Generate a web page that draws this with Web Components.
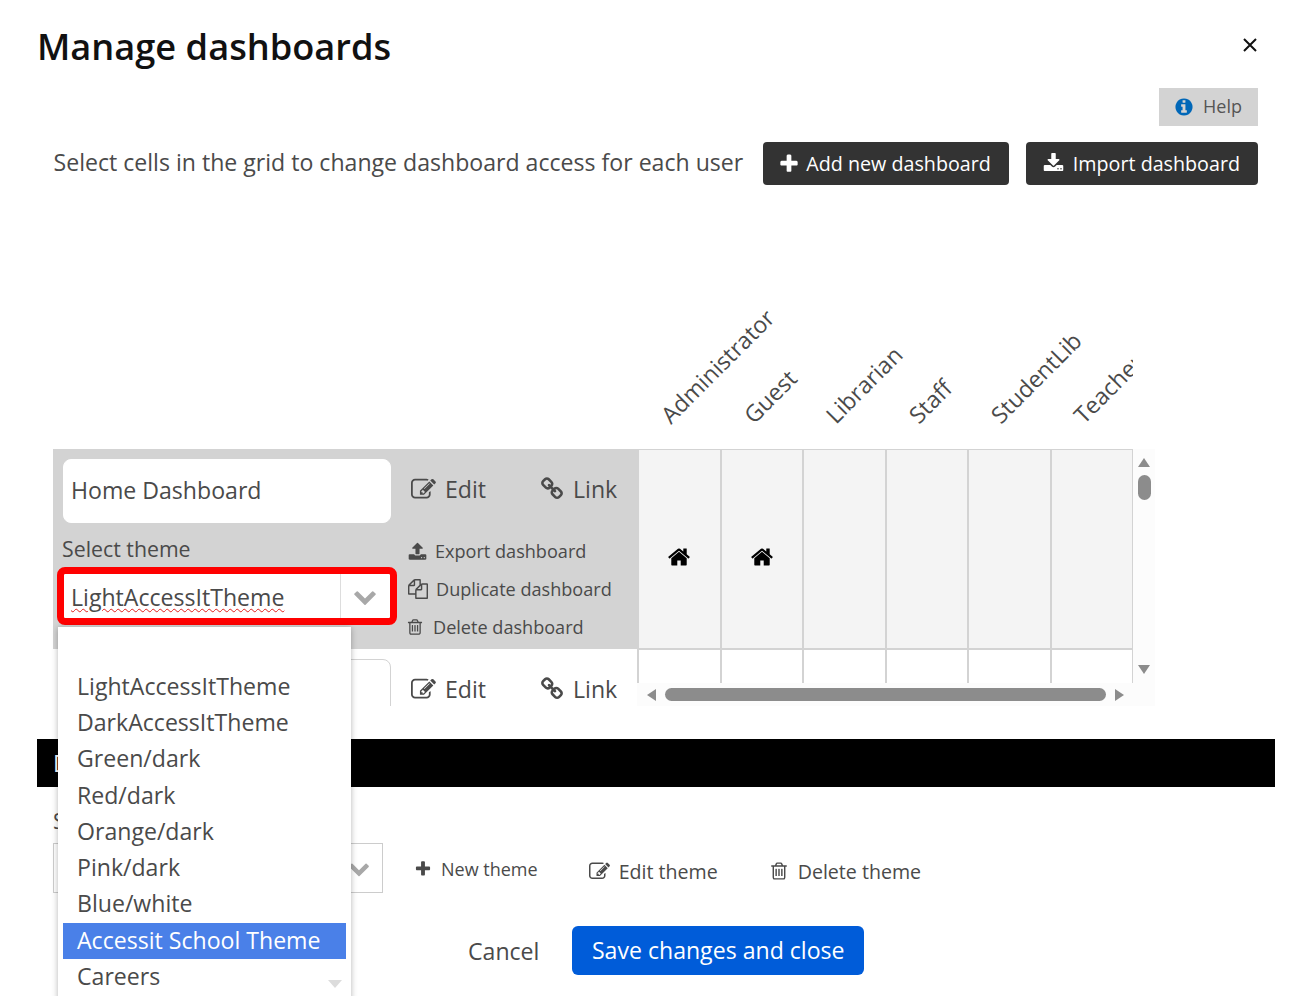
<!DOCTYPE html>
<html lang="en">
<head>
<meta charset="utf-8">
<title>Manage dashboards</title>
<style>
	html, body { margin: 0; padding: 0; height: 996px; overflow: hidden; background: #fff; }
	body { font-family: "Open Sans", sans-serif; color: #4a4a4a; }
</style>
</head>
<body>
<dash-dialog></dash-dialog>
<script>
'use strict';

const ICONS = {
	plus: 'M1600 736v192q0 40-28 68t-68 28h-416v416q0 40-28 68t-68 28h-192q-40 0-68-28t-28-68v-416h-416q-40 0-68-28t-28-68v-192q0-40 28-68t68-28h416v-416q0-40 28-68t68-28h192q40 0 68 28t28 68v416h416q40 0 68 28t28 68z',
	download: 'M1344 1344q0-26-19-45t-45-19-45 19-19 45 19 45 45 19 45-19 19-45zm256 0q0-26-19-45t-45-19-45 19-19 45 19 45 45 19 45-19 19-45zm128-224v320q0 40-28 68t-68 28h-1472q-40 0-68-28t-28-68v-320q0-40 28-68t68-28h465l135 136q58 56 136 56t136-56l136-136h464q40 0 68 28t28 68zm-325-569q17 41-14 70l-448 448q-18 19-45 19t-45-19l-448-448q-31-29-14-70 17-39 59-39h256v-448q0-26 19-45t45-19h256q26 0 45 19t19 45v448h256q42 0 59 39z',
	upload: 'M1344 1472q0-26-19-45t-45-19-45 19-19 45 19 45 45 19 45-19 19-45zm256 0q0-26-19-45t-45-19-45 19-19 45 19 45 45 19 45-19 19-45zm128-224v320q0 40-28 68t-68 28h-1472q-40 0-68-28t-28-68v-320q0-40 28-68t68-28h427q21 56 70.500 92t110.500 36h256q61 0 110.500-36t70.500-92h427q40 0 68 28t28 68zm-325-648q-17 40-59 40h-256v448q0 26-19 45t-45 19h-256q-26 0-45-19t-19-45v-448h-256q-42 0-59-40-17-39 14-69l448-448q18-19 45-19t45 19l448 448q31 30 14 69z',
	home: 'M1472 992v480q0 26-19 45t-45 19h-384v-384h-256v384h-384q-26 0-45-19t-19-45v-480q0-1 .5-3t.5-3l575-474 575 474q1 2 1 6zm223-69l-62 74q-8 9-21 11h-3q-13 0-21-7l-692-577-692 577q-12 8-24 7-13-2-21-11l-62-74q-8-10-7-23.500t11-21.500l719-599q32-26 76-26t76 26l244 204v-195q0-14 9-23t23-9h192q14 0 23 9t9 23v408l219 182q10 8 11 21.500t-7 23.500z',
	chevron: 'M1683 808l-742 741q-19 19-45 19t-45-19l-742-741q-19-19-19-45.500t19-45.500l166-165q19-19 45-19t45 19l531 531 531-531q19-19 45-19t45 19l166 165q19 19 19 45.500t-19 45.500z',
	info: 'M1152 1376v-160q0-14-9-23t-23-9h-96v-512q0-14-9-23t-23-9h-320q-14 0-23 9t-9 23v160q0 14 9 23t23 9h96v320h-96q-14 0-23 9t-9 23v160q0 14 9 23t23 9h448q14 0 23-9t9-23zm-128-896v-160q0-14-9-23t-23-9h-192q-14 0-23 9t-9 23v160q0 14 9 23t23 9h192q14 0 23-9t9-23zm640 416q0 209-103 385.500t-279.500 279.500-385.500 103-385.500-103-279.500-279.500-103-385.500 103-385.500 279.500-279.500 385.500-103 385.500 103 279.500 279.500 103 385.500z',
	edit: 'M888 1184l116-116-152-152-116 116v56h96v96h56zm440-720q-16-16-33 1l-350 350q-17 17-1 33t33-1l350-350q17-17 1-33zm80 594v190q0 119-84.500 203.500t-203.500 84.500h-832q-119 0-203.500-84.500t-84.500-203.500v-832q0-119 84.500-203.500t203.500-84.500h832q63 0 117 25 15 7 18 23 3 17-9 29l-49 49q-14 14-32 8-23-6-45-6h-832q-66 0-113 47t-47 113v832q0 66 47 113t113 47h832q66 0 113-47t47-113v-126q0-13 9-22l64-64q15-15 35-7t20 29zm-96-738l288 288-672 672h-288v-288zm444 132l-92 92-288-288 92-92q28-28 68-28t68 28l152 152q28 28 28 68t-28 68z',
	link: 'M1520 1216q0-40-28-68l-208-208q-28-28-68-28-42 0-72 32 3 3 19 18.500t21.500 21.500 15 19 13 25.500 3.500 27.500q0 40-28 68t-68 28q-15 0-27.500-3.500t-25.500-13-19-15-21.500-21.500-18.500-19q-33 31-33 73 0 40 28 68l206 207q27 27 68 27 40 0 68-26l147-146q28-28 28-67zm-703-705q0-40-28-68l-206-207q-28-28-68-28-39 0-68 27l-147 146q-28 28-28 67 0 40 28 68l208 208q27 27 68 27 42 0 72-31-3-3-19-18.500t-21.500-21.500-15-19-13-25.500-3.500-27.500q0-40 28-68t68-28q15 0 27.500 3.500t25.500 13 19 15 21.500 21.500 18.500 19q33-31 33-73zm895 705q0 120-85 203l-147 146q-83 83-203 83-121 0-204-85l-206-207q-83-83-83-203 0-123 88-209l-88-88q-86 88-208 88-120 0-204-84l-208-208q-84-84-84-204t85-203l147-146q83-83 203-83 121 0 204 85l206 207q83 83 83 203 0 123-88 209l88 88q86-88 208-88 120 0 204 84l208 208q84 84 84 204z',
	trash: 'M704 736v576q0 14-9 23t-23 9h-64q-14 0-23-9t-9-23v-576q0-14 9-23t23-9h64q14 0 23 9t9 23zm256 0v576q0 14-9 23t-23 9h-64q-14 0-23-9t-9-23v-576q0-14 9-23t23-9h64q14 0 23 9t9 23zm256 0v576q0 14-9 23t-23 9h-64q-14 0-23-9t-9-23v-576q0-14 9-23t23-9h64q14 0 23 9t9 23zm128 724v-948h-896v948q0 22 7 40.500t14.500 27 10.500 8.500h832q3 0 10.500-8.500t14.500-27 7-40.500zm-672-1076h448l-48-117q-7-9-17-11h-317q-10 2-17 11zm928 32v64q0 14-9 23t-23 9h-96v948q0 83-47 143.500t-113 60.500h-832q-66 0-113-58.500t-47-141.500v-952h-96q-14 0-23-9t-9-23v-64q0-14 9-23t23-9h309l70-167q15-37 54-63t79-26h320q40 0 79 26t54 63l70 167h309q14 0 23 9t9 23z',
	files: 'M1696 384q40 0 68 28t28 68v1216q0 40-28 68t-68 28h-960q-40 0-68-28t-28-68v-288h-544q-40 0-68-28t-28-68v-672q0-40 20-88t48-76l408-408q28-28 76-48t88-20h416q40 0 68 28t28 68v328q68-40 128-40h416zm-544 213l-299 299h299v-299zm-640-384l-299 299h299v-299zm196 647l316-316v-416h-384v416q0 40-28 68t-68 28h-416v640h512v-256q0-40 20-88t48-76zm956 804v-1152h-384v416q0 40-28 68t-68 28h-416v640h896z',
};

class FaIcon extends HTMLElement {
	connectedCallback() {
		let size = this.getAttribute('size') || 20;
		let shadow = this.shadowRoot || this.attachShadow({mode: 'open'});
		shadow.innerHTML = `<style>
				:host { display: inline-flex; flex: none; }
				svg { display: block; fill: currentColor; }
			</style>
			<svg width="${size}" height="${size}" viewBox="0 0 1792 1792"><path d="${ICONS[this.getAttribute('name')]}"/></svg>`;
	}
}
customElements.define('fa-icon', FaIcon);

class IconLink extends HTMLElement {
	constructor() {
		super();
		this.attachShadow({mode: 'open'}).innerHTML = `<style>
				:host { display: inline-flex; align-items: center; white-space: nowrap; color: #4a4a4a; }
			</style><slot name="icon"></slot><slot></slot>`;
	}
}
customElements.define('icon-link', IconLink);

class DarkButton extends HTMLElement {
	constructor() {
		super();
		this.attachShadow({mode: 'open'}).innerHTML = `<style>
				:host {
					display: inline-flex; align-items: center; box-sizing: border-box;
					height: 43px; padding: 0 18px 0 17px; border-radius: 4px;
					background: #333; color: #fff; font-size: 19.7px; white-space: nowrap;
				}
				::slotted(fa-icon) { margin-right: 9px; }
			</style><slot></slot>`;
	}
}
customElements.define('dark-button', DarkButton);

class ThemeSelect extends HTMLElement {
	constructor() {
		super();
		this.attachShadow({mode: 'open'}).innerHTML = `<style>
				:host { display: flex; box-sizing: border-box; background: #fff; color: #4a4a4a; font-size: 23.1px; }
				.value { flex: 1; min-width: 0; padding-left: 7px; line-height: 46px; height: 44px; white-space: nowrap; overflow: hidden; }
				.arrow { flex: none; box-sizing: border-box; width: 50px; padding-right: 2px; display: flex; align-items: center; justify-content: center; border-left: 1px solid #ddd; color: #a8a8a8; }
				:host([misspelt]) .value span { text-decoration: underline wavy #e0201c 1.4px; text-underline-offset: 2px; }
			</style>
			<div class="value"><span><slot></slot></span></div>
			<div class="arrow"><fa-icon name="chevron" size="24"></fa-icon></div>`;
	}
}
customElements.define('theme-select', ThemeSelect);

class DashRow extends HTMLElement {
	constructor() {
		super();
		this.attachShadow({mode: 'open'}).innerHTML = `<style>
				:host { display: flex; box-sizing: border-box; height: 200px; padding: 10px 0 0 10px; font-size: 23.1px; color: #4a4a4a; }
				:host([active]) { background: #d3d3d3; }
				.main { flex: none; width: 328px; }
				.name { box-sizing: border-box; height: 64px; padding-left: 7px; border: 1px solid #d3d3d3; border-radius: 8px; background: #fff; line-height: 60px; white-space: nowrap; }
				:host([active]) .name { border-color: #fff; }
				.label { height: 51px; line-height: 52px; margin-left: -1px; font-size: 21.3px; }
				theme-select { width: 326px; margin: 0 0 0 1px; outline: 7px solid #f00; border-radius: 1px; }
				.side { flex: none; margin-left: 17px; width: 229px; }
				.top { display: flex; height: 60px; align-items: center; padding-left: 3px; }
				.top icon-link:first-child { width: 129px; }
				.top fa-icon { margin-right: 9px; }
				.more { display: flex; flex-direction: column; padding-top: 13px; font-size: 18.1px; }
				.more icon-link { height: 38px; }
				.more fa-icon { margin-right: 8px; }
				.more fa-icon.bin { margin: 0 9px 0 -2px; }
			</style>
			<div class="main">
				<div class="name"><slot name="name"></slot></div>
				<div class="label">Select theme</div>
				<theme-select misspelt>LightAccessItTheme</theme-select>
			</div>
			<div class="side">
				<div class="top">
					<icon-link><fa-icon slot="icon" name="edit" size="25"></fa-icon>Edit</icon-link>
					<icon-link><fa-icon slot="icon" name="link" size="24"></fa-icon>Link</icon-link>
				</div>
				<div class="more">
					<icon-link><fa-icon slot="icon" name="upload" size="19"></fa-icon>Export dashboard</icon-link>
					<icon-link><fa-icon slot="icon" name="files" size="20"></fa-icon>Duplicate dashboard</icon-link>
					<icon-link><fa-icon class="bin" slot="icon" name="trash" size="18"></fa-icon>Delete dashboard</icon-link>
				</div>
			</div>`;
	}
}
customElements.define('dash-row', DashRow);

class RoleHeaders extends HTMLElement {
	connectedCallback() {
		let roles = ['Administrator', 'Guest', 'Librarian', 'Staff', 'StudentLib', 'Teacher'];
		let shadow = this.attachShadow({mode: 'open'});
		shadow.innerHTML = `<style>
				:host { display: flex; box-sizing: border-box; height: 264px; width: 495px; margin-left: 638px; overflow: hidden; color: #4a4a4a; font-size: 23.1px; }
				.role { flex: none; width: 82.5px; display: flex; align-items: flex-end; padding-bottom: 22px; box-sizing: border-box; }
				.role span { display: block; margin-left: 35px; line-height: 24px; white-space: nowrap; transform: rotate(-45deg); transform-origin: 0 100%; }
			</style>` + roles.map(role => `<div class="role"><span>${role}</span></div>`).join('');
	}
}
customElements.define('role-headers', RoleHeaders);

class AccessGrid extends HTMLElement {
	connectedCallback() {
		let home_row = [true, true, false, false, false, false];
		let cell = (home, shaded) => `<div class="cell ${shaded ? 'shaded' : ''}">${home ? '<fa-icon name="home" size="24"></fa-icon>' : ''}</div>`;
		let shadow = this.attachShadow({mode: 'open'});
		shadow.innerHTML = `<style>
				:host { display: grid; grid-template-columns: 584px 496px 22px; grid-template-rows: 234px 23px; margin-left: 53px; width: 1102px; height: 257px; overflow: hidden; }
				.rows { grid-row: 1 / span 2; overflow: hidden; }
				.cells { display: grid; grid-template-columns: repeat(6, 1fr); grid-template-rows: 201px 60px; overflow: hidden; border-right: 1px solid #d3d3d3; box-sizing: border-box; }
				.cell { box-sizing: border-box; border-left: 2px solid #d3d3d3; display: flex; align-items: center; justify-content: center; padding-top: 16px; color: #000; }
				.cell.shaded { background: #f4f4f4; border-top: 1px solid #d3d3d3; border-bottom: 2px solid #d3d3d3; }
				.vbar, .hbar { display: flex; align-items: center; background: #fcfcfc; }
				.vbar { grid-row: 1 / span 2; grid-column: 3; flex-direction: column; padding-top: 9px; height: 257px; box-sizing: border-box; }
				.hbar { grid-column: 2; padding: 0 9px 0 10px; }
				.up { border: 6px solid transparent; border-top: 0; border-bottom: 9px solid #8c8c8c; }
				.down { border: 6px solid transparent; border-bottom: 0; border-top: 9px solid #8c8c8c; margin-top: auto; margin-bottom: 32px; }
				.left { border: 6px solid transparent; border-left: 0; border-right: 9px solid #8c8c8c; }
				.right { border: 6px solid transparent; border-right: 0; border-left: 9px solid #8c8c8c; margin-left: auto; }
				.vthumb { width: 13px; height: 25px; margin-top: 8px; border-radius: 7px; background: #8c8c8c; }
				.hthumb { width: 441px; height: 13px; margin-left: 9px; border-radius: 7px; background: #8c8c8c; }
			</style>
			<div class="rows">
				<dash-row active><span slot="name">Home Dashboard</span></dash-row>
				<dash-row></dash-row>
			</div>
			<div class="cells">
				${home_row.map(home => cell(home, true)).join('')}
				${home_row.map(() => cell(false, false)).join('')}
			</div>
			<div class="vbar"><div class="up"></div><div class="vthumb"></div><div class="down"></div></div>
			<div class="hbar"><div class="left"></div><div class="hthumb"></div><div class="right"></div></div>`;
	}
}
customElements.define('access-grid', AccessGrid);

class ThemeList extends HTMLElement {
	connectedCallback() {
		let themes = ['', 'LightAccessItTheme', 'DarkAccessItTheme', 'Green/dark', 'Red/dark', 'Orange/dark', 'Pink/dark', 'Blue/white', 'Accessit School Theme', 'Careers'];
		let shadow = this.attachShadow({mode: 'open'});
		shadow.innerHTML = `<style>
				:host { position: absolute; left: 58px; top: 627px; width: 293px; height: 380px; padding-top: 5.5px; box-sizing: border-box; background: #fff; box-shadow: 0 1px 6px rgba(0,0,0,.3); color: #4a4a4a; font-size: 23.1px; }
				div { box-sizing: border-box; height: 36.25px; line-height: 35px; margin: 0 5px; padding-left: 14px; white-space: nowrap; }
				.on { background: #4a80e8; color: #fff; }
				i { position: absolute; left: 270px; top: 353px; border: 7px solid transparent; border-bottom: 0; border-top: 8px solid #dcdcdc; }
			</style>` + themes.map((theme, index) => `<div class="${index === 8 ? 'on' : ''}">${theme}</div>`).join('') + '<i></i>';
	}
}
customElements.define('theme-list', ThemeList);

class DashDialog extends HTMLElement {
	constructor() {
		super();
		this.attachShadow({mode: 'open'}).innerHTML = `<style>
				:host { display: block; position: relative; width: 1314px; height: 996px; overflow: hidden; }
				header { display: flex; align-items: center; justify-content: space-between; box-sizing: border-box; height: 88px; padding: 4px 57px 0 37px; }
				h1 { margin: 0; font-size: 36.2px; font-weight: 600; color: #111; }
				header svg { display: block; margin-top: -2px; }
				.help-row { display: flex; justify-content: flex-end; padding-right: 56px; }
				.help { display: flex; align-items: center; box-sizing: border-box; width: 99px; height: 38px; padding-left: 15px; background: #d3d3d3; color: #555; font-size: 18px; }
				.help fa-icon { color: #0067b8; margin-right: 9px; }
				.help span { margin-top: -2px; }
				.tools { display: flex; align-items: center; margin-top: 16px; padding: 0 56px 0 53.5px; font-size: 23.1px; color: #4a4a4a; }
				.tools span { margin: -4px auto 0 0; }
				dark-button + dark-button { margin-left: 17px; }
				.bar { box-sizing: border-box; height: 48px; margin: 33px 39px 0 37px; padding-left: 16px; background: #000; color: #fff; font-size: 23.1px; line-height: 48px; }
				.label { margin: 22px 0 0 53px; height: 34px; font-size: 21.3px; line-height: 24px; }
				.themes { display: flex; align-items: center; height: 50px; padding-left: 53px; }
				.theme-box { box-sizing: border-box; width: 330px; height: 50px; border: 1px solid #ccc; display: flex; justify-content: flex-end; align-items: center; padding-right: 12px; color: #a8a8a8; margin-right: 31px; }
				.themes icon-link { font-size: 19.6px; margin-top: 6px; }
				.themes fa-icon { margin-right: 9px; }
				.theme-box fa-icon { margin: 0; }
				.themes .new { font-size: 18px; margin: 2px 51px 0 0; }
				.themes .del { margin-left: 51px; }
				footer { display: flex; align-items: center; margin-top: 33px; padding-left: 468px; font-size: 23.1px; }
				.save { margin-left: 33px; box-sizing: border-box; height: 49px; padding: 0 19.5px; border-radius: 6px; background: #005cd9; color: #fff; line-height: 49px; }
			</style>
			<header>
				<h1>Manage dashboards</h1>
				<svg width="14" height="14" viewBox="0 0 14 14"><path d="M1 1l12 12M13 1L1 13" stroke="#111" stroke-width="2" fill="none"/></svg>
			</header>
			<div class="help-row"><div class="help"><fa-icon name="info" size="20"></fa-icon><span>Help</span></div></div>
			<div class="tools">
				<span>Select cells in the grid to change dashboard access for each user</span>
				<dark-button><fa-icon name="plus" size="22" style="margin:0 6px 0 -2px"></fa-icon>Add new dashboard</dark-button>
				<dark-button><fa-icon name="download" size="21"></fa-icon>Import dashboard</dark-button>
			</div>
			<role-headers></role-headers>
			<access-grid></access-grid>
			<div class="bar">Dashboard themes</div>
			<div class="label">Select theme</div>
			<div class="themes">
				<div class="theme-box"><fa-icon name="chevron" size="22"></fa-icon></div>
				<icon-link class="new"><fa-icon slot="icon" name="plus" size="18"></fa-icon>New theme</icon-link>
				<icon-link><fa-icon slot="icon" name="edit" size="21"></fa-icon>Edit theme</icon-link>
				<icon-link class="del"><fa-icon slot="icon" name="trash" size="20"></fa-icon>Delete theme</icon-link>
			</div>
			<footer><span>Cancel</span><div class="save">Save changes and close</div></footer>
			<theme-list></theme-list>`;
	}
}
customElements.define('dash-dialog', DashDialog);
</script>
</body>
</html>
